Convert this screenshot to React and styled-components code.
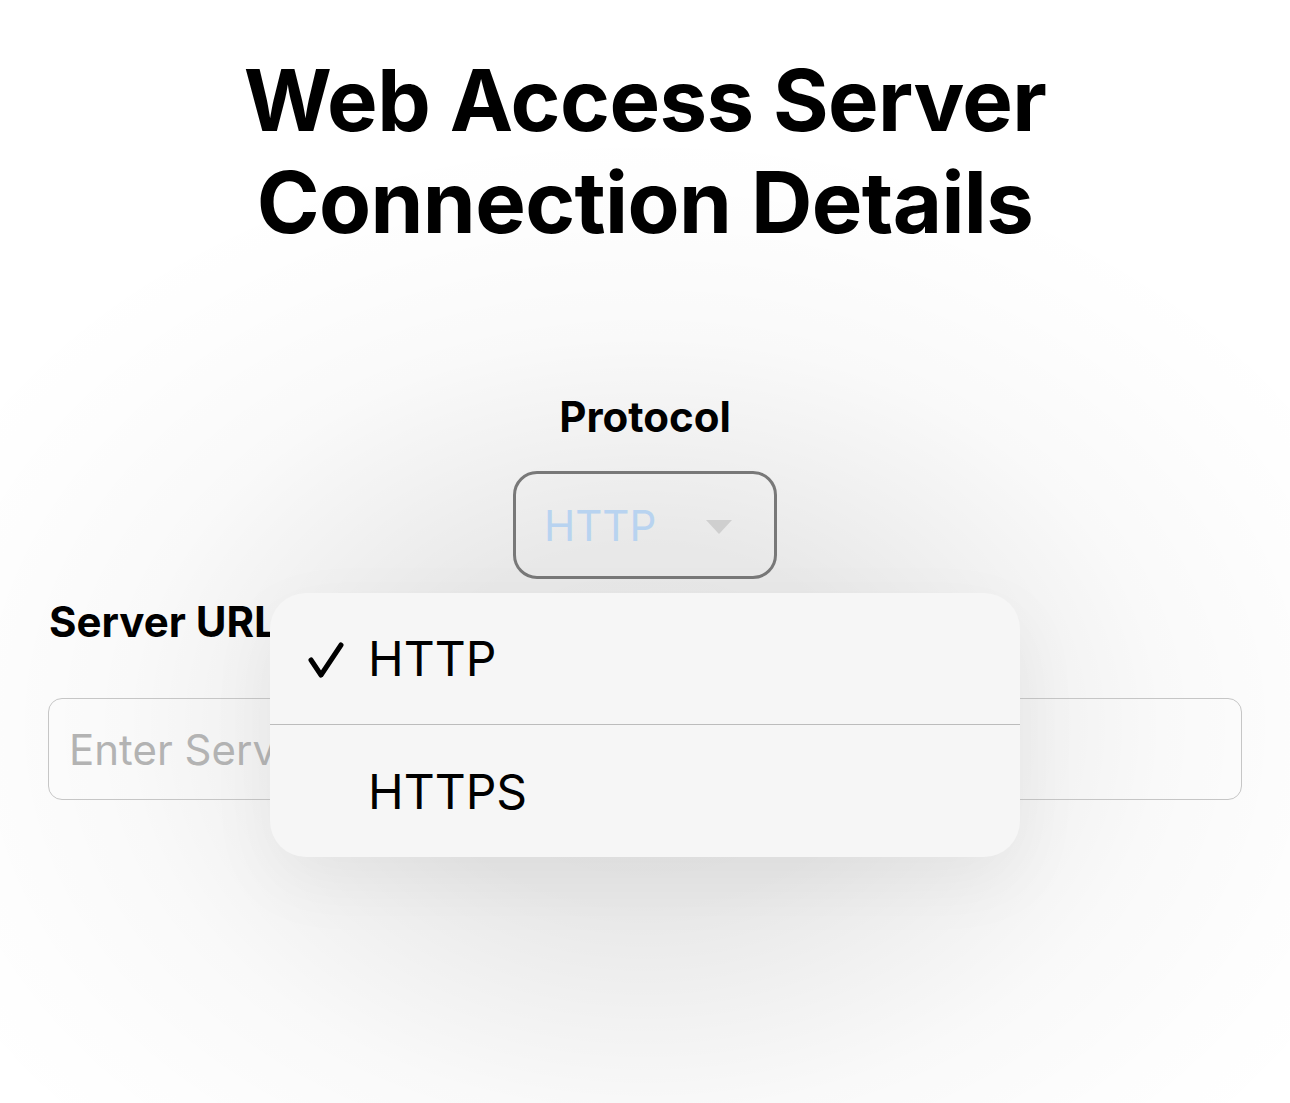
import styled, { createGlobalStyle } from 'styled-components';

const GlobalStyle = createGlobalStyle`
  body {
    margin: 0;
    background: #ffffff;
    font-family: Inter, "Noto Sans", "Liberation Sans", sans-serif;
    color: #000;
  }
`

// the soft grey cloud around the open menu is painted as a page backdrop
const Page = styled.div`
  position: relative;
  width: 1290px;
  height: 1103px;
  overflow: hidden;
  box-sizing: border-box;
  padding-top: 50px;
  background: radial-gradient(
    ellipse 800px 600px at 645px 725px,
    rgba(0, 0, 0, 0.1) 0%,
    rgba(0, 0, 0, 0.09) 30%,
    rgba(0, 0, 0, 0.05) 50%,
    rgba(0, 0, 0, 0.025) 65%,
    rgba(0, 0, 0, 0.006) 85%,
    rgba(0, 0, 0, 0) 100%
  );
`

const Title = styled.h1`
  margin: 0;
  text-align: center;
  font-size: 85px;
  line-height: 102px;
  font-weight: 700;
  letter-spacing: -0.6px;
`

const ProtocolGroup = styled.div`
  display: flex;
  flex-direction: column;
  align-items: center;
  margin-top: 139px;
`

const Label = styled.label`
  display: block;
  font-size: 42px;
  line-height: 48px;
  font-weight: 700;
`

const SelectBox = styled.div`
  margin-top: 30px;
  width: 264px;
  height: 108px;
  box-sizing: border-box;
  border: 3px solid #787878;
  border-radius: 24px;
  display: flex;
  align-items: center;
  justify-content: space-between;
  padding: 0 42px 0 28px;
`

const SelectValue = styled.span`
  font-size: 42px;
  color: #b8d3f0;
`

const Caret = styled.span`
  width: 0;
  height: 0;
  border-left: 13px solid transparent;
  border-right: 13px solid transparent;
  border-top: 14px solid #cfcfcf;
  margin-top: 4px;
`

const UrlGroup = styled.div`
  padding: 0 48px;
  margin-top: 19px;
  display: flex;
  flex-direction: column;
  gap: 52px;
`

const UrlLabel = styled(Label)`
  padding-left: 1px;
`

const Input = styled.input`
  height: 102px;
  box-sizing: border-box;
  border: 1.5px solid #c6c6c6;
  border-radius: 14px;
  background: transparent;
  padding: 0 20px;
  font-family: inherit;
  font-size: 42px;
  color: #000;
  outline: none;

  &::placeholder {
    color: #b3b3b3;
  }
`

const Menu = styled.div`
  position: absolute;
  top: 593px;
  left: 270px;
  width: 750px;
  background: #f6f6f6;
  border-radius: 36px;
  overflow: hidden;
  box-shadow: 0 24px 70px rgba(0, 0, 0, 0.05);
`

const MenuItem = styled.div`
  height: ${p => p.$h}px;
  display: flex;
  align-items: center;
  padding-left: 36px;
  gap: 22px;
  font-size: 48px;
  font-weight: 400;
  border-bottom: ${p => (p.$divider ? '1.5px solid #bcbcbc' : 'none')};
`

const CheckSlot = styled.span`
  width: 40px;
  display: flex;
  align-items: center;
`

const Check = () => (
  <svg width="40" height="40" viewBox="0 0 40 40" fill="none">
    <path d="M5 21 L15 36 L35 6" stroke="#000" strokeWidth="5" strokeLinecap="round" strokeLinejoin="round" />
  </svg>
)

const options = ['HTTP', 'HTTPS']

const App = () => {
  const selected = 'HTTP'

  return (
    <Page>
      <GlobalStyle />
      <Title>
        Web Access Server
        <br />
        Connection Details
      </Title>
      <ProtocolGroup>
        <Label>Protocol</Label>
        <SelectBox>
          <SelectValue>{selected}</SelectValue>
          <Caret />
        </SelectBox>
      </ProtocolGroup>
      <UrlGroup>
        <UrlLabel>Server URL</UrlLabel>
        <Input placeholder="Enter Server URL" />
      </UrlGroup>
      <Menu>
        {options.map((opt, i) => (
          <MenuItem key={opt} $h={i === 0 ? 131 : 132} $divider={i === 0}>
            <CheckSlot>{opt === selected && <Check />}</CheckSlot>
            {opt}
          </MenuItem>
        ))}
      </Menu>
    </Page>
  )
}

export default App
